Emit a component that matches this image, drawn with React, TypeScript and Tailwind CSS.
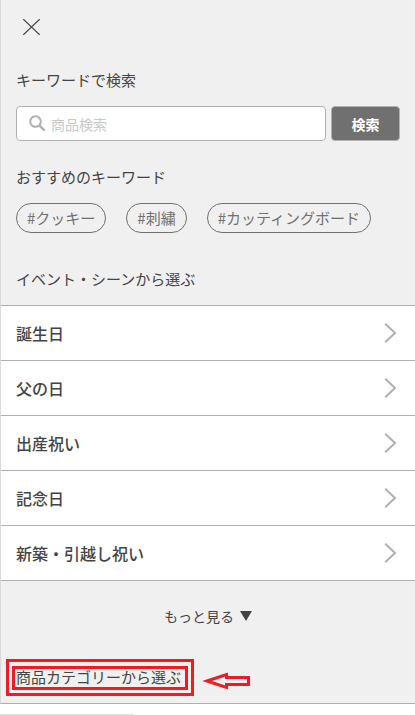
import React, { useState } from "react";

const keywords = ["#クッキー", "#刺繍", "#カッティングボード"];

const scenes = ["誕生日", "父の日", "出産祝い", "記念日", "新築・引越し祝い"];

const App = () => {
  const [search, setSearch] = useState("");

  return (
    <div className="bg-white text-[#444] font-['Noto_Sans_CJK_JP',sans-serif]">
      <nav className="border-l border-b border-l-[#d9d9d9] border-b-[#b0b0b0] bg-[#f0f0f0]">
        <div className="px-[15px] pt-4">
          <button type="button" aria-label="閉じる" className="ml-1 block p-[3px]">
            <svg width="17" height="16" viewBox="0 0 17 16" fill="none" stroke="#444" strokeWidth="1.2">
              <path d="M0.3 0.2L16.7 15.8M16.7 0.2L0.3 15.8" />
            </svg>
          </button>

          <form onSubmit={(e) => e.preventDefault()} className="mt-[30px]">
            <label htmlFor="search" className="block text-[15px] leading-6">
              キーワードで検索
            </label>
            <div className="mt-3.5 flex gap-[5px]">
              <div className="flex h-[35px] min-w-0 grow items-center rounded border border-[#b0b0b0] bg-white pl-3">
                <svg width="17" height="17" viewBox="0 0 17 17" fill="none" stroke="#b0b0b0" className="shrink-0">
                  <circle cx="6.5" cy="6.5" r="5.3" strokeWidth="2" />
                  <path d="M10.3 10.3L15.6 15.6" strokeWidth="2.4" />
                </svg>
                <input
                  id="search"
                  type="text"
                  value={search}
                  onChange={(e) => setSearch(e.target.value)}
                  placeholder="商品検索"
                  className="ml-[5px] min-w-0 grow text-sm outline-none placeholder:text-[#c8c8c8]"
                />
              </div>
              <button
                type="submit"
                className="h-[35px] w-[69px] shrink-0 rounded border border-[#b0b0b0] bg-[#707070] text-sm font-bold text-white"
              >
                検索
              </button>
            </div>
          </form>

          <h2 className="mt-6 text-[15px] leading-6">おすすめのキーワード</h2>
          <ul className="mt-3.5 flex flex-wrap gap-5">
            {keywords.map((keyword) => (
              <li key={keyword}>
                <a
                  href="#"
                  className="flex h-[30px] items-center rounded-full border border-[#707070] px-2.5 text-[15px] text-[#707070]"
                >
                  {keyword}
                </a>
              </li>
            ))}
          </ul>

          <h2 className="mt-[34px] text-[15px] leading-6">イベント・シーンから選ぶ</h2>
        </div>

        <ul className="mt-3.5 border-t border-[#b0b0b0] bg-white">
          {scenes.map((scene) => (
            <li key={scene} className="border-b border-[#b0b0b0]">
              <a href="#" className="flex h-[54px] items-center justify-between pr-[18px] pl-[15px] font-medium">
                {scene}
                <svg width="13" height="20" viewBox="0 0 13 20" fill="none" stroke="#b0b0b0" strokeWidth="2">
                  <path d="M1.2 0.8L11 10L1.2 19.2" />
                </svg>
              </a>
            </li>
          ))}
        </ul>

        <button type="button" className="mx-auto mt-[23px] flex items-center gap-1.5 text-sm leading-6">
          もっと見る
          <svg width="12" height="10" viewBox="0 0 12 10" fill="#444">
            <path d="M0 0H12L6 10Z" />
          </svg>
        </button>

        <div className="mt-[31px] flex items-center pb-[7px] pl-[5px]">
          <div className="border-3 border-[#ed1c24] px-[3px] pt-1 pb-[3px]">
            <h2 className="border-3 border-[#ed1c24] pr-1 pb-0.5 pl-px text-[15px] leading-4">
              <a href="#">商品カテゴリーから選ぶ</a>
            </h2>
          </div>
          <svg
            width="48"
            height="18"
            viewBox="0 0 48 18"
            fill="none"
            stroke="#ed1c24"
            strokeWidth="3"
            className="mt-1.5 ml-2"
          >
            <path d="M5 9L24.5 2.5V5.5H46.5V12.5H24.5V15.5Z" />
          </svg>
        </div>
      </nav>
      <div className="mt-2.5 h-px w-[134px] rounded-tr bg-[#e0e0e0]"></div>
    </div>
  );
};
export default App;
